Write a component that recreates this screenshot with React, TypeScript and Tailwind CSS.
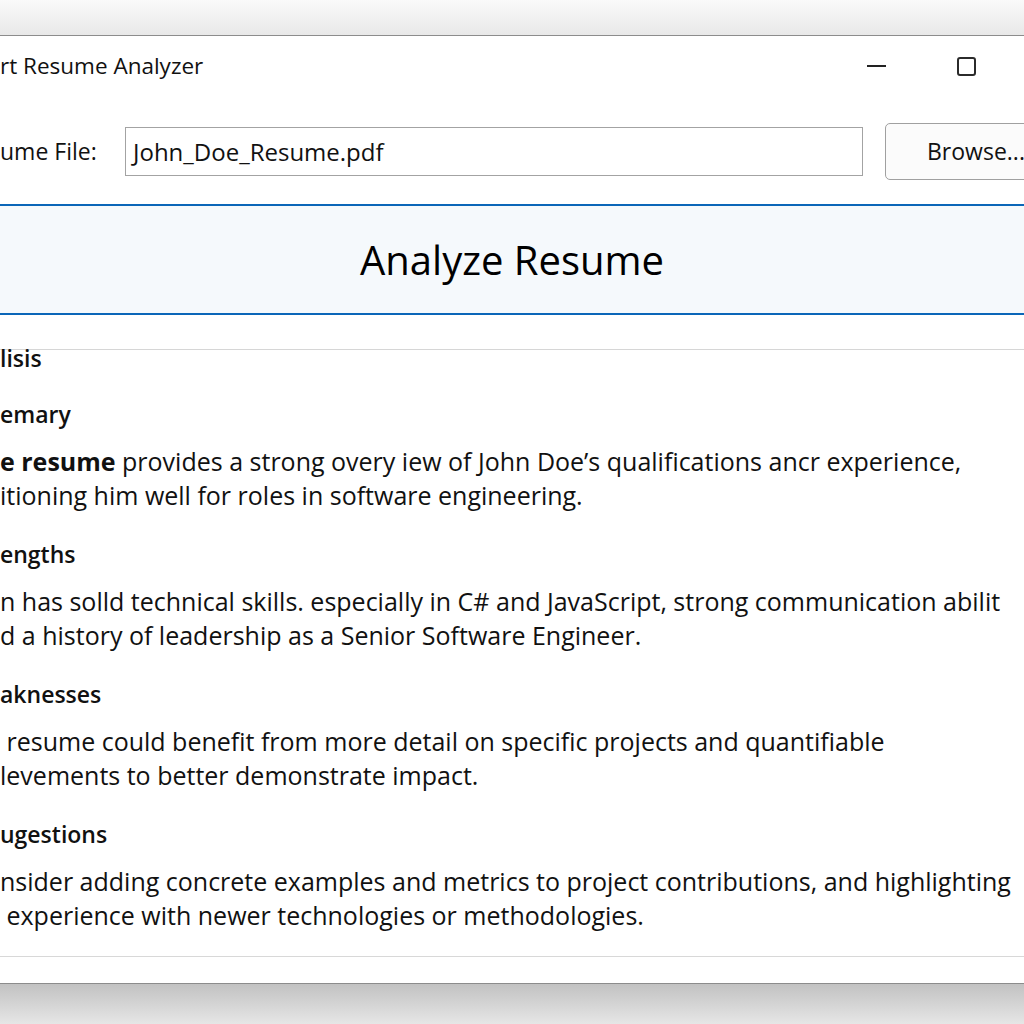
import React from "react";

const sections = [
  {
    title: "emary",
    lines: [
      <>
        <span className="font-bold">e resume</span> provides a strong overy iew of John Doe’s qualifications ancr experience,
      </>,
      <>itioning him well for roles in software engineering.</>,
    ],
  },
  {
    title: "engths",
    lines: [
      <>n has solld technical skills. especially in C# and JavaScript, strong communication abilit</>,
      <>d a history of leadership as a Senior Software Engineer.</>,
    ],
  },
  {
    title: "aknesses",
    lines: [
      <>&nbsp;resume could benefit from more detail on specific projects and quantifiable</>,
      <>levements to better demonstrate impact.</>,
    ],
  },
  {
    title: "ugestions",
    lines: [
      <>nsider adding concrete examples and metrics to project contributions, and highlighting</>,
      <>&nbsp;experience with newer technologies or methodologies.</>,
    ],
  },
];

export default function App() {
  return (
    <div className="w-[1024px] h-[1024px] overflow-hidden bg-[#e4e4e4] font-['Open_Sans',sans-serif] text-[#111]">
      {/* desktop strip above the window */}
      <div className="h-[35px] bg-gradient-to-b from-[#fafafa] to-[#e8e8e8]" />

      <div className="h-[949px] bg-white border-y border-[#8c8c8c] flex flex-col overflow-hidden">
        {/* title bar */}
        <div className="h-[60px] flex items-center">
          <div className="flex-1 text-[22.5px] whitespace-nowrap">rt Resume Analyzer</div>
          <div className="w-[46px] flex justify-center mr-[44px]">
            <div className="w-[19px] h-[1.5px] bg-[#222]" />
          </div>
          <div className="w-[46px] flex justify-center mr-[35px]">
            <div className="w-[19px] h-[19px] border-[2.5px] border-[#2b2b2b] rounded-[3px]" />
          </div>
        </div>

        {/* file row */}
        <div className="mt-[27px] h-[57px] flex items-center whitespace-nowrap">
          <div className="w-[125px] shrink-0 text-[23px]">ume File:</div>
          <div className="w-[738px] h-[49px] shrink-0 border border-[#a3a3a3] flex items-center pl-[7px] text-[24px]">
            John_Doe_Resume.pdf
          </div>
          <div className="ml-[22px] w-[170px] h-[57px] shrink-0 border border-[#a0a0a0] rounded-[5px] bg-[#fbfbfb] flex items-center pl-[41px] text-[23px]">
            Browse...
          </div>
        </div>

        {/* analyze button */}
        <div className="mt-[24px] h-[111px] border-y-2 border-[#0a66b8] bg-[#f5f9fc] flex items-center justify-center text-[40px] text-black">
          Analyze Resume
        </div>

        {/* analysis group */}
        <div className="mt-[34px] border-t border-[#d6d6d6] whitespace-nowrap">
          <div className="-mt-[6px] text-[23px] font-semibold leading-[28px]">lisis</div>
          {sections.map((s) => (
            <div key={s.title} className="mt-[28px]">
              <div className="text-[23px] font-semibold leading-[28px]">{s.title}</div>
              <div className="mt-[16px] text-[25px] leading-[34px]">
                {s.lines.map((l, i) => (
                  <div key={i}>{l}</div>
                ))}
              </div>
            </div>
          ))}
        </div>
        <div className="mt-[24px] border-t border-[#d8d8d8]" />
      </div>

      <div className="h-[40px] bg-gradient-to-b from-[#c2c2c2] to-[#e6e6e6]" />
    </div>
  );
}
